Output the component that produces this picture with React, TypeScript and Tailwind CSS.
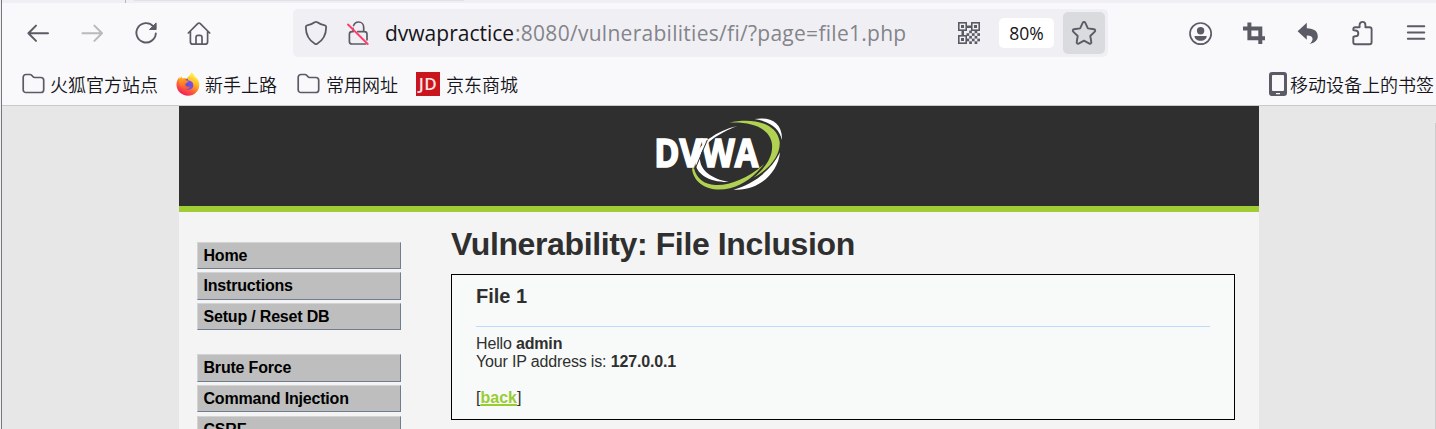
import React from 'react';

const ink = '#5b5b66';

function Icon({ children, w = 24, h = 24, className = '', view }: { children: React.ReactNode; w?: number; h?: number; className?: string; view?: string }) {
  return (
    <svg
      width={w}
      height={h}
      viewBox={view ?? `0 0 ${w} ${h}`}
      className={`block shrink-0 ${className}`}
      fill="none"
      stroke={ink}
      strokeWidth="1.7"
      strokeLinecap="round"
      strokeLinejoin="round"
    >
      {children}
    </svg>
  );
}

function FolderIcon() {
  return (
    <Icon className="mr-[5px]">
      <path d="M5 2.500h4c.7 0 1.200.3 1.700.8l1.300 1.500c.4.5.9.7 1.600.7h6.200c1.700 0 2.900 1.100 2.900 2.800v9.400c0 1.700-1.200 2.800-2.900 2.800H5c-1.700 0-2.800-1.100-2.800-2.800V5.300C2.200 3.600 3.300 2.500 5 2.500z" />
    </Icon>
  );
}

function FirefoxIcon() {
  return (
    <svg width="24" height="24" viewBox="0 0 24 24" className="mr-[5px] block shrink-0">
      <defs>
        <linearGradient id="fx" x1="0.8" y1="0.05" x2="0.3" y2="1">
          <stop offset="0.05" stopColor="#fff34a" />
          <stop offset="0.4" stopColor="#ffb01f" />
          <stop offset="0.7" stopColor="#ff5a36" />
          <stop offset="1" stopColor="#f01565" />
        </linearGradient>
        <linearGradient id="fxl" x1="0.2" y1="0" x2="0.4" y2="1">
          <stop offset="0" stopColor="#ffa51f" />
          <stop offset="1" stopColor="#ff5038" />
        </linearGradient>
        <radialGradient id="fxc" cx="0.4" cy="0.6" r="0.7">
          <stop offset="0" stopColor="#4d56e0" />
          <stop offset="1" stopColor="#9a45dd" />
        </radialGradient>
      </defs>
      <path d="M15.200.3c2 1.200 3 2.700 3.400 4.200 3 1.800 4.700 5 4.700 8.200C23.300 19 18.300 23.700 12 23.700S.5 19 .5 12.800c0-3.200 1-5.800 2.800-7.900l.3 2C4.200 5.900 4.800 5.200 5.600 4.600l.5 1.900c1.300-.7 3-.8 4.500-.3 2-1.300 4-3 4.600-5.900z" fill="url(#fx)" />
      <circle cx="12" cy="12.400" r="5.600" fill="url(#fxc)" />
      <path d="M3.500 7.500c2-1.200 5.200-1 6.600 1 1 .1 2 .1 2.500.5-.2 1.300-1.600 1.600-2.600 2.200-.9.900-.9 1.600-.3 2.500 1.500 1.500 3 1.100 4.500.5-.8 2.400-2.400 3.400-4.700 3.200-4-.4-7-4.400-6-9.900z" fill="url(#fxl)" />
      <path d="M12.500 6.200c3-1 6.200 1.300 6.200 5 0 1-.3 2-.8 3-.1-2.800-1.400-4.500-3.400-5.300-.9-.4-1.900-.6-2.900-.5z" fill="#ffc52e" />
    </svg>
  );
}

function QrIcon() {
  const cells: [number, number][] = [];
  for (let r = 0; r < 5; r++) for (let c = 0; c < 5; c++) if ((r + c) % 2 === 1) cells.push([c, r]);
  return (
    <svg width="22" height="22" viewBox="0 0 22 22" className="block shrink-0" fill={ink}>
      {[[0, 0], [13, 0], [0, 13]].map(([x, y]) => (
        <g key={`${x}-${y}`}>
          <rect x={x + 0.8} y={y + 0.8} width="7.400" height="7.400" fill="none" stroke={ink} strokeWidth="1.600" />
          <rect x={x + 3} y={y + 3} width="3" height="3" />
        </g>
      ))}
      <rect x="9" y="3.500" width="4" height="2.500" />
      <rect x="3.500" y="9" width="2.500" height="4" />
      {cells.map(([c, r]) => (
        <rect key={`${c}.${r}`} x={8.500 + c * 2.700} y={8.500 + r * 2.700} width="2.700" height="2.700" />
      ))}
    </svg>
  );
}

function Toolbar() {
  return (
    <div className="flex h-[60px] items-start">
      <div className="flex w-[291px] shrink-0 pt-[16px] pl-[22px]">
        <Icon w={28} h={28}>
          <path strokeWidth="2" d="M24 14.300H4.600M12 6.600l-7.600 7.700 7.600 7.600" />
        </Icon>
        <Icon w={28} h={28} className="ml-[26px] opacity-40">
          <path strokeWidth="2" d="M4.500 14.300H24M16.400 6.600l7.600 7.700-7.600 7.600" />
        </Icon>
        <Icon w={28} h={28} className="ml-[26px]">
          <path strokeWidth="1.900" d="M21.300 7.300A9.700 9.700 0 1 0 23.800 14.500" />
          <path d="M24.100 4.300v6.200h-6.200z" fill={ink} strokeWidth="1" />
        </Icon>
        <Icon w={28} h={28} className="ml-[25px]">
          <path d="M3.300 14L12.700 4.600c.8-.8 1.800-.8 2.600 0l9.400 9.400M5.400 12.200v10.500c0 1.500 1 2.500 2.500 2.500h12.200c1.500 0 2.500-1 2.500-2.500V12.200M11 25v-6.500c0-1.300.8-2.100 2-2.100h2c1.200 0 2 .8 2 2.100V25" />
        </Icon>
      </div>

      <div className="mt-[6px] flex h-12 w-[815px] shrink-0 items-center rounded-[5px] bg-[#f0f0f4] pr-[3px] pl-[11px]">
        <Icon h={26}>
          <path strokeWidth="1.800" d="M12 1.800c.5 0 .9.200 1.300.4 2 1.500 4.800 2.600 7.600 3.100.8.200 1.300.8 1.300 1.700-.1 7.600-3.100 13.300-9 16.700-.8.500-1.600.5-2.400 0-5.900-3.400-8.900-9.100-9-16.700 0-.9.500-1.500 1.300-1.700 2.800-.5 5.600-1.600 7.600-3.100.4-.2.800-.4 1.300-.4z" />
        </Icon>
        <Icon w={26} h={26} className="ml-[17px]">
          <path d="M8.600 5.500c.9-2.200 2.700-3.500 4.900-3.500 3 0 5.200 2.200 5.200 5.300v4.200M8.100 11.700H7c-1.600 0-2.600 1-2.600 2.600v7.100c0 1.600 1 2.600 2.600 2.600h13.500M12.800 11.700h6.600c1.600 0 2.600 1 2.600 2.600v5.500M8.100 8.400v3.300" />
          <path stroke="#ff3d6b" strokeWidth="1.900" d="M3 4.500L22.700 24" />
        </Icon>
        <div className="ml-[14px] w-[573px] font-['Open_Sans',sans-serif] text-[21px] leading-[30px] whitespace-nowrap text-[#84848a]">
          <span className="inline-block w-[130px] text-[#15141a]">dvwapractice</span>
          <span className="tracking-[0.28px]">:8080/vulnerabilities/fi/?page=file1.php</span>
        </div>
        <QrIcon />
        <div className="ml-[19px] flex h-[30px] w-[55px] items-center justify-center rounded-[5px] bg-white pt-px font-['Open_Sans',sans-serif] text-[17.500px] text-[#15141a]">
          80%
        </div>
        <div className="ml-[9px] flex size-[42px] items-center justify-center rounded-[5px] bg-[#dadbdf]">
          <Icon w={26} h={26}>
            <path strokeWidth="1.900" d="M11.800 2.700c.5-1 1.900-1 2.400 0l2.700 5.700 6.200.9c1.100.2 1.500 1.500.7 2.300l-4.500 4.400 1 6.200c.2 1.100-1 1.900-1.900 1.400L13 20.700l-5.400 2.900c-1 .5-2.100-.3-1.900-1.400l1-6.200-4.500-4.400c-.8-.8-.4-2.100.7-2.300l6.200-.9z" />
          </Icon>
        </div>
      </div>

      <div className="flex pt-[17px] pl-[80px]">
        <Icon w={26} h={26}>
          <circle cx="12.600" cy="13.600" r="10.600" />
          <circle cx="12.600" cy="10.700" r="3.700" fill={ink} stroke="none" />
          <path d="M6.500 16h12.200c.2 2.600-2.500 4.800-6.100 4.800S6.300 18.600 6.500 16z" fill={ink} stroke="none" />
        </Icon>
        <Icon w={26} h={26} className="ml-[28px]">
          <g strokeLinecap="butt" strokeLinejoin="miter" strokeWidth="4">
            <path d="M1 8.500h17.300V24M7.400 2.500v15.700h15.600" />
          </g>
        </Icon>
        <Icon w={26} h={26} className="ml-[28px]">
          <path fill={ink} stroke="none" d="M10.800 2.800v5.400c7.600.1 11.200 3.400 11 8.500-.1 3.300-3.300 6.400-8.300 7.300 4.500-3.200 4.600-8.500-2.700-8.400v4.200L1.600 11.300z" />
        </Icon>
        <Icon w={26} h={26} className="ml-[28px]">
          <path strokeWidth="1.900" d="M3.300 22.200v-5.300c.6-.5 1.200-.6 2-.6 1.700 0 3-1.300 3-2.900s-1.300-2.900-3-2.900c-.8 0-1.400-.1-2-.6V9.300c0-1.200.8-2 2-2h4.300V4.900c0-1.700 1.300-3 2.900-3s2.900 1.300 2.900 3v2.400h4.200c1.200 0 2 .8 2 2v12.900c0 1.200-.8 2-2 2H5.300c-1.200 0-2-.8-2-2z" />
        </Icon>
        <Icon w={26} h={26} className="ml-[28px]">
          <path strokeWidth="1.900" d="M3.800 6.200h16.500M3.800 12.500h16.500M3.800 18.700h16.500" />
        </Icon>
      </div>
    </div>
  );
}

function Bookmarks() {
  return (
    <div className="flex h-[42px] items-center pl-[19px] font-['Noto_Sans_CJK_SC',sans-serif] text-[18px] leading-6 font-[350] whitespace-nowrap text-[#15141a]">
      <FolderIcon />
      <span className="w-[126px]">火狐官方站点</span>
      <FirefoxIcon />
      <span className="w-[91px] pb-px">新手上路</span>
      <FolderIcon />
      <span className="w-[91px] pl-px">常用网址</span>
      <span className="mr-[6px] flex size-6 items-center justify-center bg-[#c9151e] font-['Open_Sans',sans-serif] text-[17px] font-semibold text-[#ffe3e3]">
        <span className="tracking-[0.4px]">JD</span>
      </span>
      <span>京东商城</span>
      <span className="grow" />
      <Icon w={18}>
        <path fillRule="evenodd" fill={ink} stroke="none" d="M3 0h12a3 3 0 0 1 3 3v18a3 3 0 0 1-3 3H3a3 3 0 0 1-3-3V3a3 3 0 0 1 3-3zM4 3a1 1 0 0 0-1 1v14a1 1 0 0 0 1 1h10a1 1 0 0 0 1-1V4a1 1 0 0 0-1-1zM7 21v1.300h4V21z" />
      </Icon>
      <span className="ml-[3px] w-[146px]">移动设备上的书签</span>
    </div>
  );
}

function Logo() {
  return (
    <svg width="180" height="100" viewBox="0 3 540 300" className="block">
      <path fill="#fff" d="M374 42C420 34 458 52 456 105 448 72 424 50 374 42z" />
      <path fill="#fff" d="M450 142C444 205 384 260 310 254 370 238 424 196 450 142z" />
      <path fill="#fff" d="M322 63C268 84 214 116 210 160 209 196 246 222 296 231 236 232 196 206 195 168 198 118 262 76 322 63z" />
      <path fill="#b0d152" d="M298 53C366 38 440 52 449 110 452 148 422 190 370 218 412 184 432 148 425 112 416 68 364 50 298 53z" />
      <path fill="#b0d152" d="M186 190C190 238 240 264 300 250 340 240 374 214 402 178 350 222 300 242 256 240 222 238 200 222 192 190z" />
      <text x="73" y="187" textLength="312" lengthAdjust="spacingAndGlyphs" fill="#fff" stroke="#fff" strokeWidth="5" fontFamily="Open Sans, sans-serif" fontWeight="700" fontSize="116">
        DVWA
      </text>
      <path d="M232 105L196 190" stroke="#2f2f2f" strokeWidth="3" />
    </svg>
  );
}

function MenuItem({ label, className }: { label: string; className: string }) {
  return (
    <div className={`w-[204px] border border-t-[#d3d3d3] border-r-[#6f7d92] border-b-[#6f7d92] border-l-[#d3d3d3] bg-[#bebebe] pl-[5.500px] text-[16px] leading-[25px] font-bold tracking-[-0.19px] text-black ${className}`}>
      {label}
    </div>
  );
}

export default function App() {
  return (
    <div className="flex h-[429px] w-[1436px] overflow-hidden bg-[#f0f0f4]">
      <div className="w-px shrink-0 bg-[#f0f0f4]" />
      <div className="w-px shrink-0 bg-[#77777b]" />
      <div className="flex w-[1434px] shrink-0 flex-col">
        <div className="flex h-[3px] shrink-0 bg-[#f0f0f4]">
          <div className="w-[123px]" />
          <div className="w-px bg-[#b8b8bc]" />
          <div className="ml-[8px] h-px w-[330px] bg-[#e2e2e6]" />
        </div>
        <div className="h-[103px] shrink-0 border-b border-[#c9c9cc] bg-[#f9f9fb]">
          <Toolbar />
          <Bookmarks />
        </div>
        <div className="flex h-[323px] bg-[#e7e7e7] font-['Liberation_Sans',Arial,sans-serif]">
          <div className="ml-[177px] flex h-full w-[1080px] shrink-0 flex-col bg-[#f4f4f4]">
            <header className="h-[106px] shrink-0 border-b-[6px] border-[#a1cc33] bg-[#2f2f2f] pl-[451px]">
              <Logo />
            </header>
            <div className="flex h-[217px] overflow-hidden">
              <nav className="w-[272px] shrink-0 pt-[30px] pl-[18px]">
                <MenuItem label="Home" className="h-[27px]" />
                <MenuItem label="Instructions" className="mt-[3px] h-[28px]" />
                <MenuItem label="Setup / Reset DB" className="mt-[3px] h-[27px]" />
                <MenuItem label="Brute Force" className="mt-[24px] h-[28px]" />
                <MenuItem label="Command Injection" className="mt-[3px] h-[27px]" />
                <MenuItem label="CSRF" className="mt-[4px] h-[27px]" />
              </nav>
              <main className="w-[784px] text-[16px] leading-[18px] tracking-[-0.16px] text-[#2f2f2f]">
                <h1 className="mt-[14px] h-[48px] text-[32px] leading-[37px] font-bold tracking-[-0.38px]">Vulnerability: File Inclusion</h1>
                <section className="h-[146px] border border-black bg-[#f8faf9] px-[24px]">
                  <h3 className="h-[51px] pt-[9px] text-[20px] leading-6 font-bold tracking-normal">File 1</h3>
                  <div className="mb-[8px] h-px bg-[#c0d8fa]" />
                  <p>
                    Hello <b>admin</b>
                  </p>
                  <p>
                    Your IP address is: <b>127.0.0.1</b>
                  </p>
                  <p className="mt-[18px] tracking-normal">
                    [<a className="font-bold text-[#99cc33] underline decoration-2">back</a>]
                  </p>
                </section>
              </main>
            </div>
          </div>
          <div className="mt-[17px] ml-auto w-px bg-[#cdcdcd]" />
        </div>
      </div>
    </div>
  );
}
